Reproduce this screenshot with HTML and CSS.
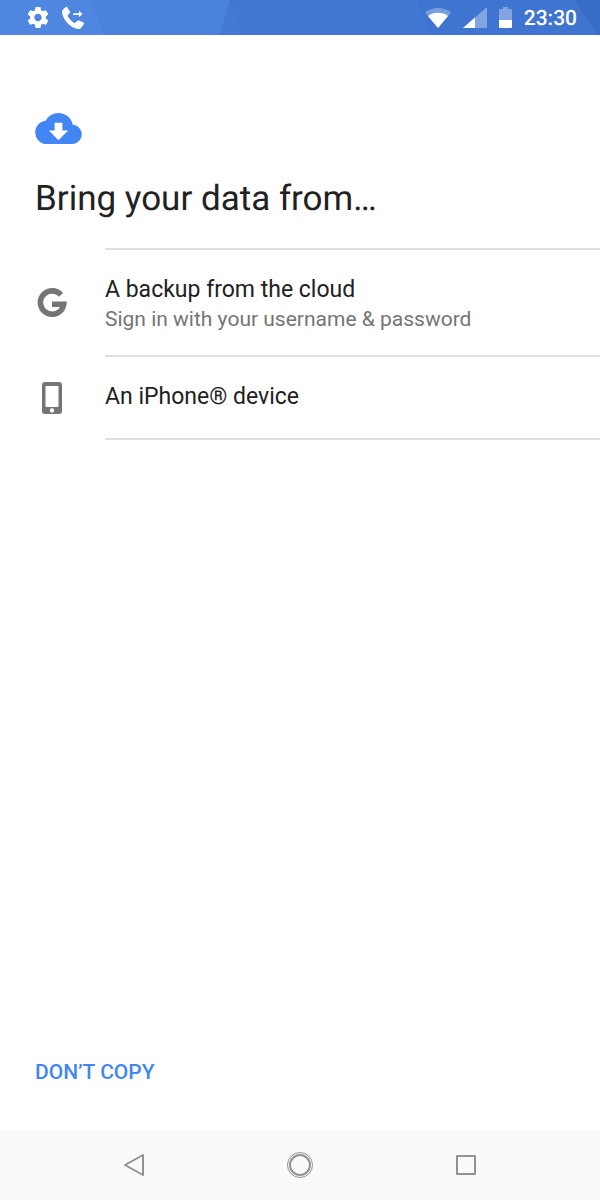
FILE: index.html
```html
<!DOCTYPE html>
<html lang="en">
<head>
<meta charset="utf-8">
<meta name="viewport" content="width=device-width, initial-scale=1">
<title>Bring your data</title>
<link rel="stylesheet" href="styles.css">
</head>
<body>
<div class="screen">
  <header class="status">
    <svg class="status-bg" viewBox="0 0 600 35" preserveAspectRatio="none" aria-hidden="true">
      <path fill="#4b82dc" d="M0 0H230L220 35H0z"/>
      <path fill="#4f86df" d="M0 0H90L105 35H0z"/>
      <path fill="#4679d4" d="M230 0L243 35H220z"/>
      <path fill="#3f74d0" d="M417 0H600V35H429z"/>
      <path fill="#396cc6" d="M574 0H600V35H598z"/>
    </svg>
    <div class="status-group">
      <svg width="22" height="22" viewBox="1.500 2 21 21" fill="#fff" aria-label="Settings" role="img"><path d="M19.43 12.98c.04-.32.07-.64.07-.98s-.03-.66-.07-.98l2.11-1.65c.19-.15.24-.42.12-.64l-2-3.46c-.12-.22-.39-.3-.61-.22l-2.49 1c-.52-.4-1.08-.73-1.69-.98l-.38-2.65C14.46 2.18 14.25 2 14 2h-4c-.25 0-.46.18-.49.42l-.38 2.65c-.61.25-1.17.59-1.69.98l-2.49-1c-.23-.09-.49 0-.61.22l-2 3.46c-.13.22-.07.49.12.64l2.11 1.65c-.04.32-.07.65-.07.98s.03.66.07.98l-2.11 1.65c-.19.15-.24.42-.12.64l2 3.46c.12.22.39.3.61.22l2.49-1c.52.4 1.08.73 1.69.98l.38 2.65c.03.24.24.42.49.42h4c.25 0 .46-.18.49-.42l.38-2.65c.61-.25 1.17-.59 1.69-.98l2.49 1c.23.09.49 0 .61-.22l2-3.46c.12-.22.07-.49-.12-.64l-2.11-1.65zM12 15.5c-1.93 0-3.5-1.57-3.5-3.5s1.57-3.5 3.5-3.5 3.5 1.57 3.5 3.5-1.57 3.5-3.5 3.5z"/></svg>
      <svg width="24" height="24" viewBox="0 0 24 24" fill="#fff" aria-label="Call forwarding" role="img"><path d="M4.500 1.200Q5.400.5 6.200 1.300L8.900 5.600Q9.400 6.700 8.500 7.500L6.400 9.600C7.900 12.900 10.700 15.700 13.800 17.200L16 14.900Q16.800 14.200 17.900 14.600L22.400 16.400Q23.400 17 22.900 18L20.100 21.900Q19 23.300 17.200 23C9.100 21.500 2.200 14.400 1 6.400Q.8 4.500 2.200 3.200z"/><path d="M12.200 7.200H18V4.700L21.500 8L18 11.200V9H12.200z"/></svg>
    </div>
    <div class="status-group status-right">
      <svg width="26" height="22" viewBox="0 0 26 22" fill="#fff" aria-label="Wi-Fi" role="img"><path opacity=".3" d="M0 5.500C7.500-.5 18.500-.5 26 5.500L13 21z"/><path d="M3 9C8.500 4.700 17.500 4.700 23 9L13 21z"/></svg>
      <svg width="24" height="22" viewBox="0 0 24 22" fill="#fff" aria-label="Mobile signal" role="img"><path opacity=".35" d="M24 0V21H0z"/><path d="M12 10.500V21H0z"/></svg>
      <svg width="13" height="22" viewBox="0 0 13 22" fill="#fff" aria-label="Battery" role="img"><path opacity=".35" d="M4 0H9V2H12Q13 2 13 3V13H0V3Q0 2 1 2H4z"/><path d="M0 13H13V20Q13 21 12 21H1Q0 21 0 20z"/></svg>
      <time class="clock">23:30</time>
    </div>
  </header>

  <main class="content">
    <svg class="cloud" viewBox="0 4 24 16" fill="#4285f4" aria-hidden="true"><path d="M19.350 10.040C18.670 6.590 15.640 4 12 4 9.110 4 6.600 5.640 5.350 8.040 2.340 8.360 0 10.910 0 14c0 3.310 2.690 6 6 6h13c2.760 0 5-2.240 5-5 0-2.640-2.050-4.780-4.650-4.960zM17 13l-5 5-5-5h3V9h4v4h3z"/></svg>
    <h1 class="title">Bring your data from…</h1>
    <ul class="options">
      <li>
        <button class="option" type="button">
          <svg class="option-icon" viewBox="0 -2 34 34" aria-hidden="true"><path fill="none" stroke="#757575" stroke-width="5.600" d="M26 7.900A11.700 11.700 0 1 0 28.700 17.300H17"/></svg>
          <span class="option-text">
            <span class="option-name">A backup from the cloud</span>
            <span class="option-note">Sign in with your username &amp; password</span>
          </span>
        </button>
      </li>
      <li>
        <button class="option option-single" type="button">
          <svg class="option-icon" viewBox="0 0 34 34" aria-hidden="true"><path fill="#757575" fill-rule="evenodd" d="M10 1H24Q27 1 27 4V30Q27 33 24 33H10Q7 33 7 30V4Q7 1 10 1zM10.500 5V26H23.500V5zM17 27.200A2.200 2.200 0 1 0 17 31.600A2.200 2.200 0 1 0 17 27.200z"/></svg>
          <span class="option-text"><span class="option-name">An iPhone® device</span></span>
        </button>
      </li>
    </ul>
    <button class="skip" type="button">DON’T COPY</button>
  </main>

  <nav class="navbar" aria-label="System navigation">
    <button class="nav-button" type="button" aria-label="Back"><svg width="28" height="28" viewBox="0 0 28 28" fill="none" stroke="#929292" stroke-width="2" stroke-linejoin="round"><path d="M23 4V24L5 14z"/></svg></button>
    <button class="nav-button" type="button" aria-label="Home"><svg width="28" height="28" viewBox="0 0 28 28" fill="none" stroke="#929292"><circle cx="14" cy="14" r="12.500"/><circle cx="14" cy="14" r="10" stroke-width="2"/></svg></button>
    <button class="nav-button" type="button" aria-label="Recent apps"><svg width="28" height="28" viewBox="0 0 28 28" fill="none" stroke="#929292" stroke-width="2" stroke-linejoin="round"><path d="M5 5H23V23H5z"/></svg></button>
  </nav>
</div>
</body>
</html>
```
FILE: styles.css
```css
* {
  box-sizing: border-box;
}

body {
  margin: 0;
  background: #fff;
  color: #212121;
  font-family: Roboto, "Noto Sans", sans-serif;
  text-rendering: geometricPrecision;
}

button {
  margin: 0;
  padding: 0;
  border: 0;
  background: none;
  color: inherit;
  font: inherit;
  text-align: left;
  cursor: pointer;
}

.screen {
  display: flex;
  flex-direction: column;
  min-height: 100vh;
}

.status {
  position: relative;
  display: flex;
  align-items: center;
  justify-content: space-between;
  height: 35px;
  padding: 0 23px 0 27px;
  background: #4277d3;
  color: #fff;
}

.status-bg {
  position: absolute;
  inset: 0;
  width: 100%;
  height: 100%;
}

.status-group {
  position: relative;
  display: flex;
  align-items: center;
  gap: 12px;
}

.clock {
  padding-top: 2px;
  font-size: 21px;
  font-weight: 500;
  line-height: 24px;
}

.content {
  display: flex;
  flex: 1;
  flex-direction: column;
  align-items: flex-start;
  padding: 78px 0 40px 35px;
}

.cloud {
  width: 47px;
  height: 31px;
}

.title {
  margin: 33px 0 27px;
  font-size: 35px;
  font-weight: 400;
  line-height: 44px;
}

.options {
  align-self: stretch;
  margin: 0;
  padding: 0;
  list-style: none;
}

.option {
  display: flex;
  align-items: center;
  width: 100%;
}

.option-icon {
  flex: none;
  width: 34px;
  height: 34px;
  margin-right: 36px;
}

.option-text {
  display: flex;
  flex: 1;
  flex-direction: column;
  padding: 25px 0 22px;
  border-top: 2px solid #e0e0e0;
}

.option-single .option-text {
  padding-bottom: 26px;
  border-bottom: 2px solid #e0e0e0;
}

.option-name {
  font-size: 23px;
  line-height: 30px;
}

.option-note {
  color: #757575;
  font-size: 21px;
  line-height: 28px;
}

.skip {
  margin-top: auto;
  color: #4285f4;
  font-size: 21px;
  font-weight: 500;
  line-height: 36px;
}

.navbar {
  display: flex;
  align-items: center;
  justify-content: center;
  gap: 138px;
  height: 70px;
  background: #fafafa;
}

.nav-button svg {
  display: block;
}
```
